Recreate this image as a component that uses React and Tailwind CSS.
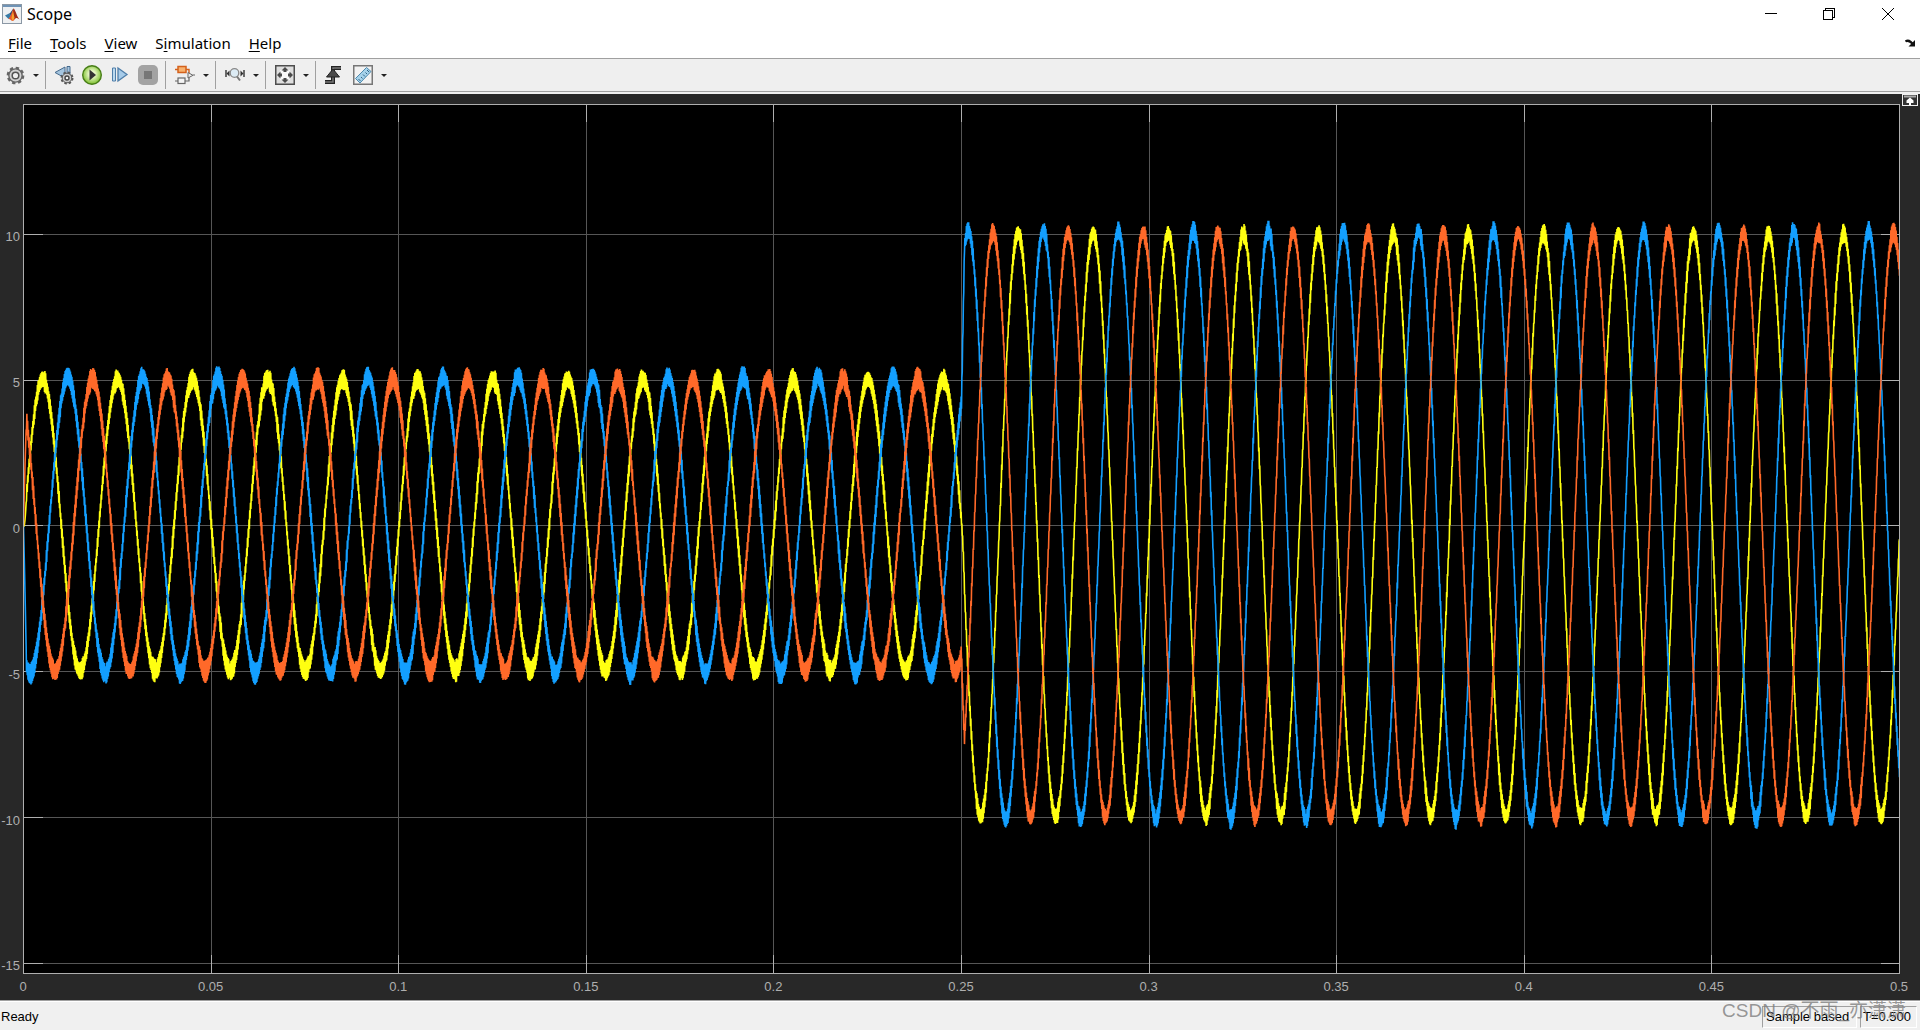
import { useMemo } from 'react';

const X_MAX = 0.5;
const Y_MIN = -15.33;
const Y_MAX = 14.47;
const X_TICKS = [0, 0.05, 0.1, 0.15, 0.2, 0.25, 0.3, 0.35, 0.4, 0.45, 0.5];
const Y_TICKS = [10, 5, 0, -5, -10, -15];

const SIGNALS = [
    { name: 'Phase A', color: '#ffff11', peak: 0.0051, crestOffset: 0 },
    { name: 'Phase B', color: '#139fff', peak: 0.0118, crestOffset: 0.1 },
    { name: 'Phase C', color: '#ff6929', peak: 0.0184, crestOffset: 0.03 },
];

const MENUS = [
    { before: '', key: 'F', after: 'ile' },
    { before: '', key: 'T', after: 'ools' },
    { before: '', key: 'V', after: 'iew' },
    { before: 'S', key: 'i', after: 'mulation' },
    { before: '', key: 'H', after: 'elp' },
];

const xPct = (t) => `${(t / X_MAX) * 100}%`;
const yPct = (v) => `${((Y_MAX - v) / (Y_MAX - Y_MIN)) * 100}%`;

// repeatable noise so the trace is the same on every render
function noise(n) {
    const s = Math.sin(n * 12.9898) * 43758.5453;
    return s - Math.floor(s);
}

// load current: 5 A, then 10 A from t = 0.25 s, with switching ripple on top
function buildTrace({ peak, crestOffset }) {
    const steps = 5000;
    const points = [];
    for (let i = 0; i <= steps; i++) {
        const t = (i / steps) * X_MAX;
        let amp = 5 * Math.min(1, t / 0.0008);
        if (t > 0.25) amp += 5 * Math.min(1, (t - 0.25) / 0.0008);
        const wave = Math.cos((2 * Math.PI * (t - peak)) / 0.02);
        const crest = Math.pow(Math.abs(wave), 4);
        const base = t < 0.25 ? 0.15 : 0.1;
        const size = base + 0.09 * crest + 0.16 * noise(Math.floor(i / 4) + peak * 1000);
        const ripple = t < 0.0008 ? 0 : (i % 2 ? 1 : -1) * size;
        const v = amp * wave + ripple + 0.05 * crest + crestOffset * Math.pow(crest, 3) * Math.sign(wave);
        points.push(`${((t / X_MAX) * 1876).toFixed(2)},${(((Y_MAX - v) / (Y_MAX - Y_MIN)) * 869).toFixed(2)}`);
    }
    return points.join(' ');
}

function Chart() {
    const traces = useMemo(() => SIGNALS.map((s) => ({ ...s, points: buildTrace(s) })), []);

    return (
        <svg className="block h-full w-full overflow-visible" role="img" aria-label="Scope signals">
            <rect width="100%" height="100%" fill="#000" />

            {/* Grid */}
            <g stroke="#565656" shapeRendering="crispEdges" transform="translate(.5 0)">
                {X_TICKS.slice(1, -1).map((t) => (
                    <line key={t} x1={xPct(t)} x2={xPct(t)} y1="0" y2="100%" />
                ))}
                {Y_TICKS.map((v) => (
                    <line key={v} x1="0" x2="100%" y1={yPct(v)} y2={yPct(v)} />
                ))}
            </g>

            {/* Tick marks */}
            <g stroke="#afafaf" shapeRendering="crispEdges" transform="translate(.5 0)">
                {X_TICKS.slice(1, -1).map((t) => (
                    <g key={t}>
                        <line x1={xPct(t)} x2={xPct(t)} y1="0" y2="18" />
                        <svg y="100%" className="overflow-visible">
                            <line x1={xPct(t)} x2={xPct(t)} y1="-18" y2="0" />
                        </svg>
                    </g>
                ))}
                {Y_TICKS.map((v) => (
                    <g key={v}>
                        <line x1="0" x2="19" y1={yPct(v)} y2={yPct(v)} />
                        <svg x="100%" className="overflow-visible">
                            <line x1="-19" x2="0" y1={yPct(v)} y2={yPct(v)} />
                        </svg>
                    </g>
                ))}
            </g>

            {/* Signals */}
            <svg width="100%" height="100%" viewBox="0 0 1876 869" preserveAspectRatio="none">
                {traces.map((s) => (
                    <polyline
                        key={s.name}
                        points={s.points}
                        fill="none"
                        stroke={s.color}
                        strokeWidth="1.6"
                        strokeLinejoin="bevel"
                        vectorEffect="non-scaling-stroke"
                        transform="translate(.5 .5)"
                    />
                ))}
            </svg>

            <rect width="100%" height="100%" fill="none" stroke="#afafaf" shapeRendering="crispEdges" />

            {/* Axis labels */}
            <g fill="#afafaf" fontFamily="Liberation Sans, sans-serif" fontSize="13">
                {X_TICKS.map((t) => (
                    <text key={t} x={xPct(t)} y="100%" dy="18" textAnchor="middle">{t}</text>
                ))}
                {Y_TICKS.map((v) => (
                    <text key={v} x="-3" y={yPct(v)} dy="7" textAnchor="end">{v}</text>
                ))}
            </g>
        </svg>
    );
}

export default function App() {
    return (
        <div className="flex h-screen flex-col overflow-hidden bg-white font-['Noto_Sans',sans-serif] text-black">
            <TitleBar />
            <MenuBar />
            <Toolbar />

            <main className="flex min-h-0 flex-1 bg-[#282828]">
                <div className="min-w-0 flex-1 pt-[10px] pb-[27px] pl-[23px]">
                    <Chart />
                </div>
                <div className="w-[21px] pl-[3px]">
                    <button aria-label="Maximize axes" className="block">
                        <MaximizeAxesIcon />
                    </button>
                </div>
            </main>

            <StatusBar />
        </div>
    );
}

function TitleBar() {
    return (
        <header className="flex h-7 shrink-0 items-center">
            <div className="flex flex-1 items-center gap-1 pl-0.5">
                <MatlabIcon />
                <h1 className="pl-px text-base leading-7">Scope</h1>
            </div>
            <button aria-label="Minimize" className="flex h-7 w-[62px] items-center justify-center">
                <svg width="12" height="12" shapeRendering="crispEdges"><path d="M0 5.5h12" stroke="#000" /></svg>
            </button>
            <button aria-label="Restore" className="flex h-7 w-[54px] items-center justify-center">
                <svg width="12" height="12" fill="none" stroke="#000" shapeRendering="crispEdges">
                    <path d="M.5 2.5h9v9h-9zM2.5 2.5v-2h9v9h-2" />
                </svg>
            </button>
            <button aria-label="Close" className="flex h-7 w-16 items-center justify-center">
                <svg width="12" height="12" stroke="#000"><path d="M0 0l12 12M12 0L0 12" /></svg>
            </button>
        </header>
    );
}

function MenuBar() {
    return (
        <nav className="flex h-[30px] shrink-0 items-center pr-1 pl-2">
            <div className="flex flex-1 gap-[18px]">
                {MENUS.map((m) => (
                    <button key={m.key} className="text-[15px] leading-8">
                        {m.before}
                        <span className="underline underline-offset-2">{m.key}</span>
                        {m.after}
                    </button>
                ))}
            </div>
            <button aria-label="Dock window">
                <svg width="11" height="8" fill="none" stroke="#111">
                    <path d="M.5 2.5C3 .5 5 2 8 5" strokeWidth="2.200" />
                    <path d="M10 1v6.500H3.500z" fill="#111" stroke="none" />
                </svg>
            </button>
        </nav>
    );
}

function Caret({ label }) {
    return (
        <button aria-label={label} className="flex h-7 w-3 items-center justify-center">
            <svg width="6" height="3"><path d="M0 0h6L3 3z" fill="#222" /></svg>
        </button>
    );
}

function Tool({ label, children }) {
    return (
        <button aria-label={label} className="flex h-7 w-6 items-center justify-center">
            {children}
        </button>
    );
}

function Separator() {
    return <div className="h-7 w-px bg-[#a0a0a0]" />;
}

function Toolbar() {
    return (
        <div className="shrink-0 border-b-2 border-[#f0f0f0]">
            <div className="flex h-[34px] items-center border-y border-[#a0a0a0] bg-[#efefef] pl-[3px]">
                <Tool label="Configuration properties"><GearIcon size={19} /></Tool>
                <div className="w-[3px]" />
                <Caret label="Configuration menu" />
                <div className="w-[3px]" />
                <Separator />
                <div className="flex gap-1 pr-[5px] pl-[6px]">
                    <Tool label="Step back options"><StepBackIcon /></Tool>
                    <Tool label="Run"><RunIcon /></Tool>
                    <Tool label="Step forward"><StepForwardIcon /></Tool>
                    <Tool label="Stop"><StopIcon /></Tool>
                </div>
                <Separator />
                <div className="flex gap-[3px] pr-[3px] pl-[7px]">
                    <Tool label="Highlight block"><BlockIcon /></Tool>
                    <Caret label="Highlight menu" />
                </div>
                <Separator />
                <div className="flex gap-[3px] pr-[3px] pl-[7px]">
                    <Tool label="Zoom"><ZoomXIcon /></Tool>
                    <Caret label="Zoom menu" />
                </div>
                <Separator />
                <div className="flex gap-[3px] pr-[3px] pl-[7px]">
                    <Tool label="Scale axes"><FitIcon /></Tool>
                    <Caret label="Scale menu" />
                </div>
                <Separator />
                <div className="flex gap-[3px] pl-[5px]">
                    <Tool label="Triggers"><TriggerIcon /></Tool>
                    <div />
                    <Tool label="Measurements"><RulerIcon /></Tool>
                    <Caret label="Measurements menu" />
                </div>
            </div>
        </div>
    );
}

function StatusBar() {
    return (
        <footer className="relative flex h-[30px] shrink-0 items-end justify-between border-t border-[#a0a0a0] bg-[#f0f0f0] font-['Liberation_Sans',sans-serif] text-[13px] shadow-[inset_0_1px_0_#fff]">
            <p className="pb-[3px] pl-px leading-5">Ready</p>
            <div className="flex gap-[3px] pr-[3px] pb-[2px] whitespace-nowrap">
                <p className="h-[22px] w-[95px] border border-t-[#a0a0a0] border-r-white border-b-white border-l-[#a0a0a0] pl-[3px] leading-5">Sample based</p>
                <p className="h-[22px] w-[57px] border border-t-[#a0a0a0] border-r-white border-b-white border-l-[#a0a0a0] pl-[2px] leading-5">T=0.500</p>
            </div>
            <span className="pointer-events-none absolute -top-1 right-[14px] font-['Liberation_Sans','Noto_Sans_CJK_SC',sans-serif] text-[19px] leading-7 whitespace-nowrap text-[#7d7d7d]/80">
                CSDN @不雨_亦潇潇
            </span>
        </footer>
    );
}

function MatlabIcon() {
    return (
        <svg width="20" height="20" viewBox="0 0 20 20">
            <rect x=".5" y=".5" width="19" height="19" fill="#eef0f2" stroke="#8b98a5" />
            <path d="M1 1h18v2H1z" fill="#6f93b5" />
            <path d="M3 11.500l4-2 2.500 2.500-3 3z" fill="#377aa6" />
            <path d="M7 9.500c2-.5 3-4 4.500-5L9.500 12z" fill="#234c76" />
            <path d="M11.500 4.500C9.500 8 9 12 6.500 15c2 0 3 2 4 2 2 0 3-4 4-4z" fill="#e4572e" />
            <path d="M11.500 4.500c2 1 3 7.500 6 11-2-2-4-2-5 0-1-3-2-7-1-11z" fill="#9e2d18" />
            <path d="M11 7l1.500 7-2 3-1-3z" fill="#f9a12e" />
        </svg>
    );
}

function GearIcon({ size }) {
    return (
        <svg width={size} height={size} viewBox="0 0 20 20">
            <circle cx="10" cy="10" r="8" fill="none" stroke="#666" strokeWidth="2.600" strokeDasharray="3.500 2.780" />
            <circle cx="10" cy="10" r="7" fill="#d2d2d2" stroke="#666" strokeWidth="1.500" />
            <circle cx="10" cy="10" r="3.500" fill="#efefef" stroke="#555" strokeWidth="1.600" />
        </svg>
    );
}

function StepBackIcon() {
    return (
        <svg width="20" height="20" viewBox="0 0 20 20">
            <path d="M11 2v11L1 7.500z" fill="#a5c5df" stroke="#44698c" />
            <path d="M13 1.500h3v11h-3z" fill="#a5c5df" stroke="#44698c" />
            <circle cx="13" cy="13" r="5.500" fill="none" stroke="#555" strokeWidth="2" strokeDasharray="2.400 1.920" />
            <circle cx="13" cy="13" r="4.800" fill="#ccc" stroke="#555" />
            <circle cx="13" cy="13" r="2" fill="#f3f3f3" stroke="#444" strokeWidth="1.400" />
        </svg>
    );
}

function RunIcon() {
    return (
        <svg width="22" height="22" viewBox="0 0 22 22" className="shrink-0">
            <defs>
                <radialGradient id="run" cx=".5" cy=".45" r=".55">
                    <stop offset=".3" stopColor="#e9f8c8" />
                    <stop offset="1" stopColor="#78bd27" />
                </radialGradient>
            </defs>
            <circle cx="11" cy="11" r="9.300" fill="url(#run)" stroke="#477d18" strokeWidth="1.400" />
            <path d="M8.500 5.500v11l6.500-5.500z" fill="#333" />
        </svg>
    );
}

function StepForwardIcon() {
    return (
        <svg width="18" height="18" viewBox="0 0 18 18">
            <path d="M1.500 2h3v13h-3z" fill="#bcd9ee" stroke="#4f7ea9" />
            <path d="M7 2v13l9-6.500z" fill="#a6cbe9" stroke="#4f7ea9" strokeWidth="1.300" />
        </svg>
    );
}

function StopIcon() {
    return (
        <svg width="20" height="20" viewBox="0 0 20 20">
            <rect width="20" height="20" rx="5" fill="#a3a3a3" />
            <rect x="6" y="6" width="8" height="8" fill="#777" />
        </svg>
    );
}

function BlockIcon() {
    return (
        <svg width="20" height="20" viewBox="0 0 20 20" fill="none">
            <path d="M0 4.500h3M11 4.500h3v4" stroke="#d4611c" strokeWidth="1.400" />
            <rect x="3" y="1.500" width="8" height="6" fill="#f8b26e" stroke="#d4611c" strokeWidth="1.500" />
            <path d="M0 16h3M10 16h4v-4M18 10h2" stroke="#666" strokeWidth="1.200" />
            <rect x="3" y="13" width="7" height="5.500" fill="#f4f4f4" stroke="#666" strokeWidth="1.200" />
            <path d="M13 7.500v5.500l5-2.700z" fill="#eee" stroke="#666" />
        </svg>
    );
}

function ZoomXIcon() {
    return (
        <svg width="20" height="16" viewBox="0 0 20 16" fill="none" className="shrink-0">
            <path d="M1 3v7M19 3v7" stroke="#333" strokeWidth="1.400" />
            <path d="M1.500 6.500l3-3v6zM18.500 6.500l-3-3v6z" fill="#333" />
            <circle cx="9.500" cy="6" r="4.300" fill="#dcebf4" stroke="#888" strokeWidth="1.300" />
            <path d="M12 9.500l3 4" stroke="#777" strokeWidth="2" />
        </svg>
    );
}

function FitIcon() {
    return (
        <svg width="20" height="20" viewBox="0 0 20 20">
            <rect x=".75" y=".75" width="18.500" height="18.500" fill="#dedede" stroke="#4d4d4d" strokeWidth="1.500" />
            <path d="M5 5h10v10H5z" fill="#fff" opacity=".8" />
            <path d="M10 2l3.500 3.500-2 0v1.500h-3V5.500H6.500zM10 18l3.500-3.500h-2V13h-3v1.500H6.500zM2 10l3.500-3.500v2H7v3H5.500v2zM18 10l-3.500-3.500v2H13v3h1.500v2z" fill="#4a4a4a" />
        </svg>
    );
}

function TriggerIcon() {
    return (
        <svg width="18" height="20" viewBox="0 0 18 20">
            <path d="M1 17h8V3h8" fill="none" stroke="#222" strokeWidth="4" />
            <path d="M1 17h8V3h8" fill="none" stroke="#777" strokeWidth="1.500" />
            <path d="M9 4l6.500 8H2.500z" fill="#4a4a4a" stroke="#222" />
        </svg>
    );
}

function RulerIcon() {
    return (
        <svg width="20" height="20" viewBox="0 0 20 20">
            <rect x=".75" y=".75" width="18.500" height="18.500" fill="#f2f2f2" stroke="#777" strokeWidth="1.500" />
            <path d="M2.500 13.500l11-11 4.500 4-11 11.500z" fill="#a6d2ea" stroke="#4d89ad" />
            <path d="M7.500 16l-2-2M9.500 13.500l-1.500-1.500M12 11.500l-2-2M14 9l-1.500-1.500M16 7l-2-2" stroke="#2f6587" />
        </svg>
    );
}

function MaximizeAxesIcon() {
    return (
        <svg width="16" height="12" viewBox="0 0 16 12">
            <rect x=".5" y=".5" width="15" height="11" fill="#333" stroke="#f0f0f0" />
            <path d="M2 1.500h12v2H2z" fill="#aaa" />
            <path d="M8 3.500l3.500 3V9H9v2H7V9H4.500V6.500z" fill="#fff" />
        </svg>
    );
}
